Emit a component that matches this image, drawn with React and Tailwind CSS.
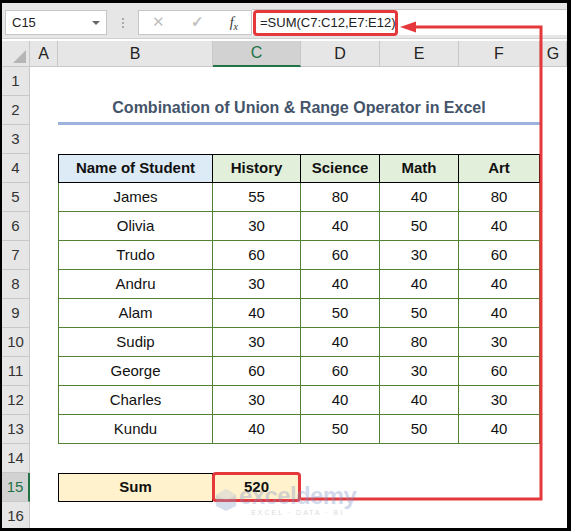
import React from "react";

const cols = ["A", "B", "C", "D", "E", "F", "G"];

const students = [
  ["James", 55, 80, 40, 80],
  ["Olivia", 30, 40, 50, 40],
  ["Trudo", 60, 60, 30, 60],
  ["Andru", 30, 40, 40, 40],
  ["Alam", 40, 50, 50, 40],
  ["Sudip", 30, 40, 80, 30],
  ["George", 60, 60, 30, 60],
  ["Charles", 30, 40, 40, 30],
  ["Kundu", 40, 50, 50, 40],
];

const RowHead = ({ n, active }) => (
  <div
    className={
      active
        ? "h-[29px] flex items-center justify-center bg-[#d2d2d2] text-[#217346] border-b border-[#c8c8c8] border-r-2 border-r-[#217346] text-[15px]"
        : "h-[29px] flex items-center justify-center bg-[#e6e6e6] text-[#333] border-b border-r border-[#c8c8c8] text-[15px]"
    }
  >
    {n}
  </div>
);

const Empty = () => <div className="h-[29px] bg-white" />;

const App = () => {
  return (
    <div
      className="w-[571px] h-[531px] bg-black pt-[3px] pl-[2px] pr-[4px] pb-[3px] overflow-hidden"
      style={{ fontFamily: "'Liberation Sans', Arial, sans-serif" }}
    >
      <div className="relative w-[565px] h-[525px] bg-white overflow-hidden">
        {/* formula bar */}
        <div className="h-[36px] bg-[#e6e6e6] flex items-end pb-[3px] border-b border-[#d0d0d0]">
          <div className="ml-[3px] w-[102px] h-[25px] bg-white border border-[#c6c6c6] flex items-center justify-between px-[6px] text-[13px] text-[#222]">
            <span>C15</span>
            <span className="w-0 h-0 border-l-[4px] border-r-[4px] border-t-[4px] border-l-transparent border-r-transparent border-t-[#666]" />
          </div>
          <div className="w-[31px] h-[25px] flex flex-col items-center justify-center gap-[2px]">
            <span className="w-[2px] h-[2px] bg-[#aaa]" />
            <span className="w-[2px] h-[2px] bg-[#aaa]" />
            <span className="w-[2px] h-[2px] bg-[#aaa]" />
          </div>
          <div className="w-[114px] h-[25px] bg-white border border-[#c6c6c6] flex items-center justify-around text-[#c0c0c0] text-[15px]">
            <span>✕</span>
            <span className="font-bold">✓</span>
            <span className="text-[#333] italic font-['Liberation_Serif',serif] text-[14px]">
              f<sub className="text-[10px]">x</sub>
            </span>
          </div>
          <div className="flex-1 h-[26px] bg-white border-t border-[#c6c6c6] flex items-center">
            <div className="ml-[1px] w-[145px] h-[26px] border-[3px] border-[#e5383d] rounded-[4px] flex items-center pl-[4px] text-[13px] text-[#222]">
              =SUM(C7:C12,E7:E12)
            </div>
          </div>
        </div>

        {/* sheet */}
        <div className="mt-[2px] grid grid-cols-[28px_28px_155px_88px_79px_79px_81px_27px]">
          {/* column headers */}
          <div className="h-[26px] bg-[#e6e6e6] border-r border-b border-[#c8c8c8] flex items-end justify-end p-[3px]">
            <svg width="13" height="13" viewBox="0 0 13 13">
              <polygon points="13,0 13,13 0,13" fill="#b5b5b5" />
            </svg>
          </div>
          {cols.map((c) => (
            <div
              key={c}
              className={
                c === "C"
                  ? "h-[26px] bg-[#d2d2d2] text-[#217346] border-r border-[#c8c8c8] border-b-2 border-b-[#217346] flex items-center justify-center text-[16px]"
                  : "h-[26px] bg-[#e6e6e6] text-[#222] border-r border-b border-[#c8c8c8] flex items-center justify-center text-[16px]"
              }
            >
              {c}
            </div>
          ))}

          {/* row 1 */}
          <RowHead n={1} />
          {cols.map((c) => (
            <Empty key={c} />
          ))}

          {/* row 2: title */}
          <RowHead n={2} />
          <Empty />
          <div className="col-span-5 h-[29px] flex items-end justify-center border-b-[3px] border-[#9db3dd] pb-[2px] text-[16px] font-bold text-[#44546a]">
            Combination of Union &amp; Range Operator in Excel
          </div>
          <Empty />

          {/* row 3 */}
          <RowHead n={3} />
          {cols.map((c) => (
            <Empty key={c} />
          ))}

          {/* row 4: table header */}
          <RowHead n={4} />
          <Empty />
          <div className="h-[29px] bg-[#ddebf7] border border-black flex items-center justify-center font-bold text-[15px] text-[#111]">
            Name of Student
          </div>
          {["History", "Science", "Math", "Art"].map((h) => (
            <div
              key={h}
              className="h-[29px] bg-[#e2efda] border-y border-r border-black flex items-center justify-center font-bold text-[15px] text-[#111]"
            >
              {h}
            </div>
          ))}
          <Empty />

          {/* rows 5-13 */}
          {students.map((s, i) => (
            <React.Fragment key={s[0]}>
              <RowHead n={i + 5} />
              <Empty />
              {s.map((v, j) => (
                <div
                  key={j}
                  className={
                    "h-[29px] border-b border-r border-[#548235] flex items-center justify-center text-[15px] text-[#111]" +
                    (j === 0 ? " border-l" : "")
                  }
                >
                  {v}
                </div>
              ))}
              <Empty />
            </React.Fragment>
          ))}

          {/* row 14 */}
          <RowHead n={14} />
          {cols.map((c) => (
            <Empty key={c} />
          ))}

          {/* row 15: sum */}
          <RowHead n={15} active />
          <Empty />
          <div className="h-[29px] bg-[#fff2cc] border border-black flex items-center justify-center font-bold text-[15px] text-[#111]">
            Sum
          </div>
          <div className="h-[30px] -mt-[1px] -ml-[1px] bg-[#fff2cc] border-[3px] border-[#e5383d] rounded-[4px] flex items-center justify-center font-bold text-[15px] text-[#111]">
            520
          </div>
          <Empty />
          <Empty />
          <Empty />
          <Empty />

          {/* row 16 */}
          <RowHead n={16} />
          {cols.map((c) => (
            <Empty key={c} />
          ))}
        </div>

        {/* red connector arrow */}
        <svg
          className="absolute left-0 top-0 pointer-events-none"
          width="565"
          height="525"
          viewBox="0 0 565 525"
        >
          <polyline
            points="410,24 539,24 539,496 299,496"
            fill="none"
            stroke="#e5383d"
            strokeWidth="3"
          />
          <polygon points="398,24 414,18.5 414,29.5" fill="#e5383d" />
        </svg>

        {/* watermark */}
        <div className="absolute left-[213px] top-[481px] flex items-center gap-[2px] opacity-35 pointer-events-none">
          <svg width="22" height="26" viewBox="0 0 26 28">
            <polygon points="13,1 25,8 25,21 13,27 1,21 1,8" fill="#8fa2c8" />
            <polygon points="13,1 25,8 13,14 1,8" fill="#b8c6e2" />
          </svg>
          <div className="flex flex-col items-center leading-none">
            <span className="text-[24px] font-bold text-[#7f93c8] tracking-tight">exceldemy</span>
            <span className="text-[7px] text-[#999] tracking-[2px] mt-[1px]">EXCEL · DATA · BI</span>
          </div>
        </div>
      </div>
    </div>
  );
};

export default App;
